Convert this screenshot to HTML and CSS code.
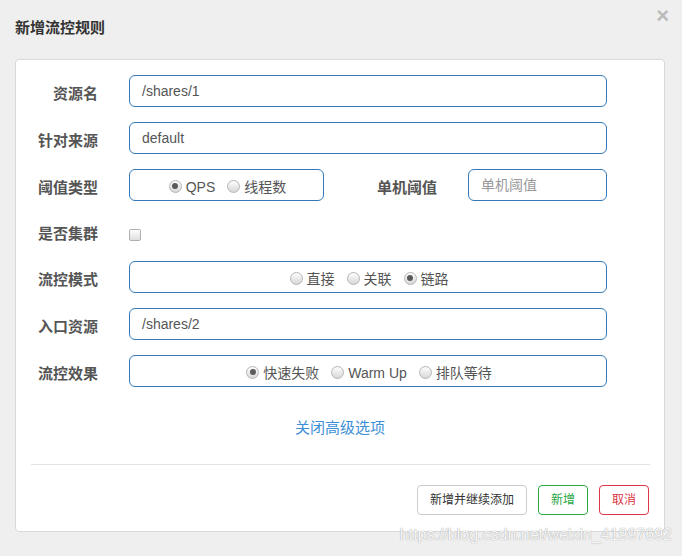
FILE: index.html
```html
<!DOCTYPE html>
<html lang="zh-CN">
<head>
<meta charset="utf-8">
<title>新增流控规则</title>
<link rel="stylesheet" href="styles.css">
</head>
<body>
<div class="modal">
  <div class="modal-header">
    <h4 class="modal-title">新增流控规则</h4>
    <span class="close">&times;</span>
  </div>
  <div class="panel">
    <div class="form">
      <div class="row">
        <label class="label">资源名</label>
        <div class="input">/shares/1</div>
      </div>
      <div class="row">
        <label class="label">针对来源</label>
        <div class="input">default</div>
      </div>
      <div class="row">
        <label class="label">阈值类型</label>
        <div class="radio-box small">
          <span class="radio checked"></span><span class="rtext">QPS</span>
          <span class="radio"></span><span class="rtext">线程数</span>
        </div>
        <label class="label inline">单机阈值</label>
        <div class="input grow placeholder">单机阈值</div>
      </div>
      <div class="row check-row">
        <label class="label">是否集群</label>
        <span class="checkbox"></span>
      </div>
      <div class="row">
        <label class="label">流控模式</label>
        <div class="radio-box">
          <span class="radio"></span><span class="rtext">直接</span>
          <span class="radio"></span><span class="rtext">关联</span>
          <span class="radio checked"></span><span class="rtext">链路</span>
        </div>
      </div>
      <div class="row">
        <label class="label">入口资源</label>
        <div class="input">/shares/2</div>
      </div>
      <div class="row">
        <label class="label">流控效果</label>
        <div class="radio-box">
          <span class="radio checked"></span><span class="rtext">快速失败</span>
          <span class="radio"></span><span class="rtext">Warm Up</span>
          <span class="radio"></span><span class="rtext">排队等待</span>
        </div>
      </div>
    </div>
    <div class="toggle"><a class="link">关闭高级选项</a></div>
    <div class="divider"></div>
    <div class="footer">
      <button class="btn">新增并继续添加</button>
      <button class="btn btn-success">新增</button>
      <button class="btn btn-danger">取消</button>
    </div>
  </div>
  <div class="watermark">https://blog.csdn.net/weixin_41997692</div>
</div>
</body>
</html>
```

FILE: styles.css
```css
* { box-sizing: border-box; }
html, body {
  margin: 0;
  padding: 0;
  background: #efefef;
}
body {
  width: 682px;
  height: 556px;
  overflow: hidden;
  font-family: "Liberation Sans", "Noto Sans CJK SC", sans-serif;
  color: #555;
}
.modal {
  position: relative;
  width: 682px;
  height: 556px;
}
.modal-header {
  display: flex;
  justify-content: space-between;
  align-items: flex-start;
  height: 59px;
  padding: 0 13px 0 15px;
}
.modal-title {
  margin: 18px 0 0 0;
  font-size: 15px;
  line-height: 20px;
  font-weight: bold;
  color: #333;
}
.close {
  margin-top: 3px;
  font-size: 22px;
  line-height: 26px;
  font-weight: bold;
  color: #bbb;
}
.panel {
  margin-left: 15px;
  width: 650px;
  height: 473px;
  background: #fff;
  border: 1px solid #d9d9d9;
  border-radius: 4px;
  padding-top: 15px;
}
.form {
  display: flex;
  flex-direction: column;
  gap: 15px;
}
.row {
  display: flex;
  align-items: flex-start;
  width: 591px;
  height: 32px;
}
.label {
  flex: 0 0 82px;
  width: 82px;
  margin-right: 31px;
  text-align: right;
  font-size: 15px;
  font-weight: bold;
  line-height: 27px;
  padding-top: 5px;
  color: #555;
}
.label.inline {
  flex: 0 0 auto;
  width: auto;
  margin-left: 53px;
  margin-right: 31px;
}
.input {
  flex: 0 0 478px;
  height: 32px;
  border: 1px solid #3479b7;
  border-radius: 6px;
  padding: 0 12px;
  font-size: 14px;
  line-height: 30px;
  color: #555;
}
.input.grow {
  flex: 1 1 auto;
}
.placeholder {
  color: #999;
}
.radio-box {
  flex: 0 0 478px;
  height: 32px;
  border: 1px solid #3479b7;
  border-radius: 6px;
  display: flex;
  justify-content: center;
  align-items: center;
  padding-top: 4px;
  font-size: 14px;
  color: #555;
  padding-left: 2px;
}
.radio-box.small {
  flex: 0 0 195px;
}
.radio {
  width: 13px;
  height: 13px;
  border-radius: 50%;
  border: 1px solid #b5b5b5;
  background: linear-gradient(#fdfdfd, #d8d8d8);
  margin-right: 4px;
  margin-top: -2px;
  display: inline-flex;
  align-items: center;
  justify-content: center;
  flex: 0 0 auto;
}
.radio.checked::after {
  content: "";
  width: 6px;
  height: 6px;
  border-radius: 50%;
  background: #5a5a5a;
}
.rtext {
  margin-right: 12px;
  line-height: 20px;
}
.rtext:last-child {
  margin-right: 0;
}
.check-row {
  height: 30px;
}
.check-row .label {
  line-height: 25px;
}
.checkbox {
  margin-top: 13px;
  width: 12px;
  height: 12px;
  border: 1px solid #b0b0b0;
  border-radius: 2px;
  background: linear-gradient(#fdfdfd, #dedede);
}
.toggle {
  margin-top: 31px;
  text-align: center;
  font-size: 15px;
  line-height: 20px;
}
.link {
  color: #3d8fd6;
  cursor: pointer;
}
.divider {
  margin: 26px 14px 0 15px;
  height: 1px;
  background: #e3e3e3;
}
.footer {
  display: flex;
  justify-content: flex-end;
  gap: 11px;
  padding: 20px 15px 0 0;
}
.btn {
  height: 30px;
  padding: 0 12px;
  background: #fff;
  border: 1px solid #ccc;
  border-radius: 4px;
  font-family: "Liberation Sans", "Noto Sans CJK SC", sans-serif;
  font-size: 12px;
  line-height: 28px;
  color: #333;
}
.btn-success {
  border-color: #28a745;
  color: #28a745;
}
.btn-danger {
  border-color: #dc3545;
  color: #dc3545;
}
.watermark {
  position: absolute;
  right: 10px;
  top: 526px;
  font-family: "Liberation Sans", sans-serif;
  font-size: 16px;
  line-height: 18px;
  color: rgba(255, 255, 255, 0.9);
  text-shadow: 0 0 1px #b0b0b0, 0 0 1px #b0b0b0;
}
```
